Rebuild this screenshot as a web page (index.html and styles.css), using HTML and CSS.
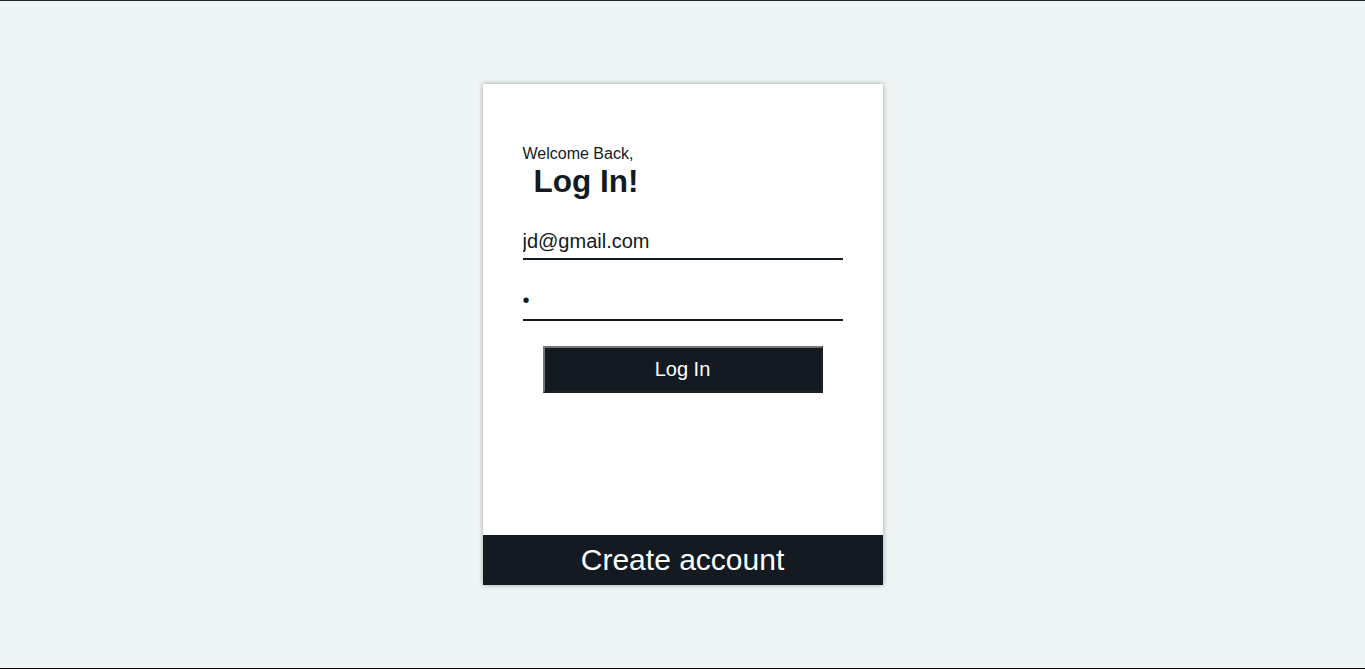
FILE: index.html
```html
<!DOCTYPE html>
<html>
<head>
<meta charset="utf-8">
<link rel="stylesheet" href="styles.css">
</head>
<body>
<div class="page">
  <div class="card">
    <form class="form">
      <p class="welcome">Welcome Back,</p>
      <h1 class="title">Log In!</h1>
      <input class="field field-email" type="email" value="jd@gmail.com">
      <input class="field field-pass" type="password" value="a">
      <button class="btn" type="button">Log In</button>
    </form>
    <div class="footer">Create account</div>
  </div>
</div>
</body>
</html>
```
FILE: styles.css
```css
html, body {
  margin: 0;
  padding: 0;
  height: 100%;
}
body {
  font-family: "Liberation Sans", Arial, sans-serif;
  background: #eff5f5;
}
.page {
  box-sizing: border-box;
  height: 669px;
  border-top: 1px solid #1f2a30;
  border-bottom: 1px solid #000;
  display: flex;
  align-items: center;
  justify-content: center;
}
.card {
  width: 400px;
  height: 501px;
  background: #fff;
  box-shadow: 0 0 5px rgba(0,0,0,0.35);
  display: flex;
  flex-direction: column;
}
.form {
  flex: 1;
  padding: 61px 40px 0;
  display: flex;
  flex-direction: column;
}
.welcome {
  margin: 0;
  font-size: 16px;
  color: #131a21;
}
.title {
  margin: 0;
  padding-left: 11px;
  font-size: 31.5px;
  font-weight: bold;
  color: #131a21;
}
.field {
  font-family: "Liberation Sans", Arial, sans-serif;
  font-size: 20px;
  color: #131a21;
  border: none;
  border-bottom: 2px solid #131a21;
  outline: none;
  padding: 0 0 3px;
  height: 27px;
  width: 320px;
}
.field-email {
  margin-top: 28px;
}
.field-pass {
  margin-top: 29px;
  padding-bottom: 7px;
  height: 23px;
}
.btn {
  align-self: center;
  margin-top: 25px;
  width: 280px;
  height: 47px;
  background: #131a21;
  color: #fff;
  font-family: "Liberation Sans", Arial, sans-serif;
  font-size: 20px;
  border: 2px outset #767676;
}
.footer {
  height: 50px;
  background: #131a21;
  color: #fff;
  font-size: 30px;
  display: flex;
  align-items: center;
  justify-content: center;
}
```
